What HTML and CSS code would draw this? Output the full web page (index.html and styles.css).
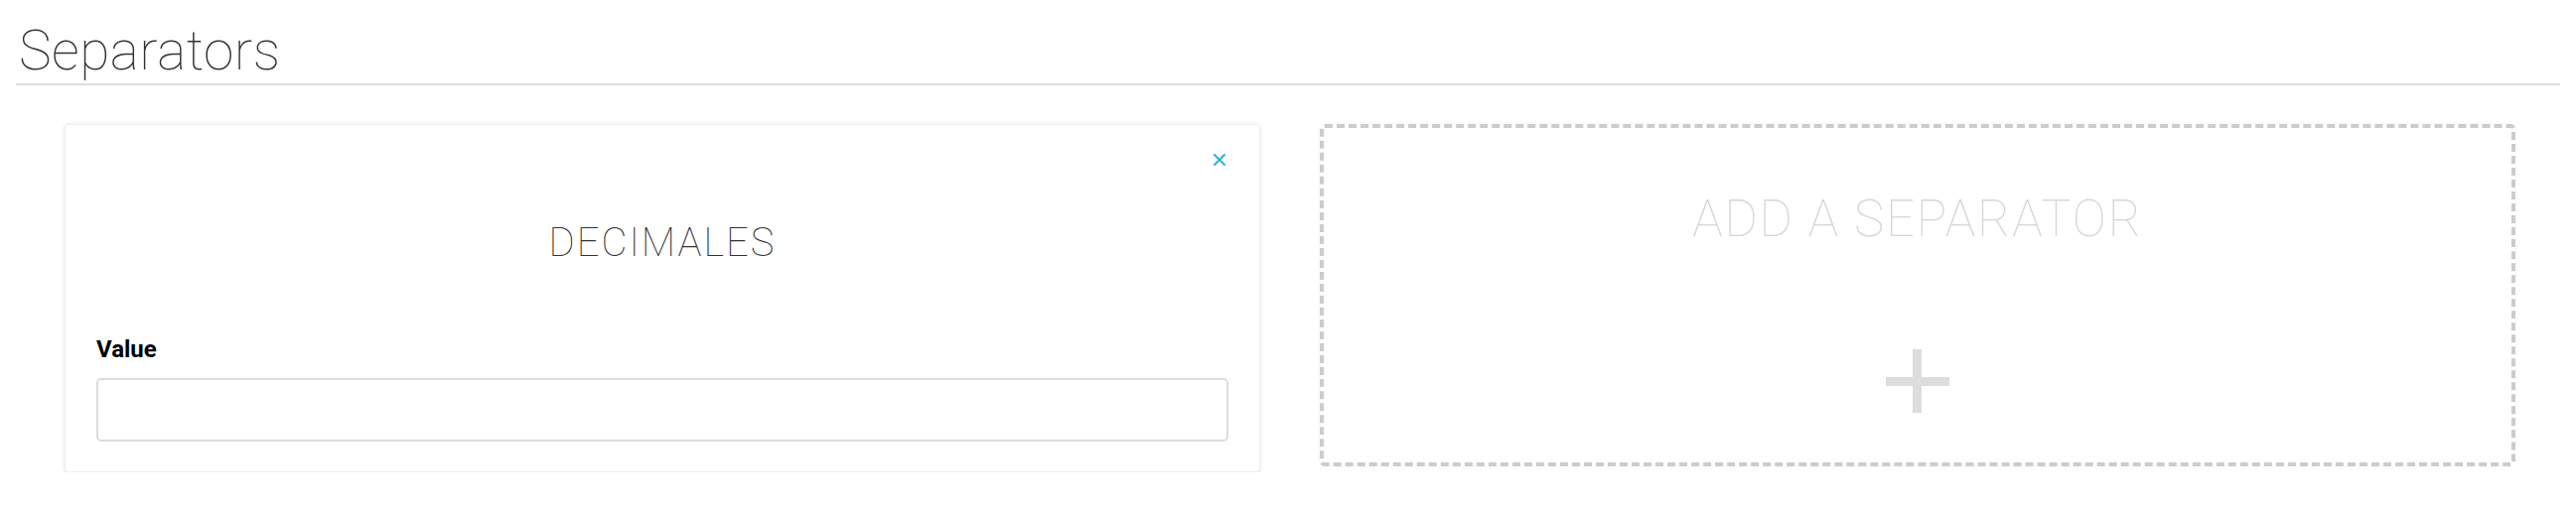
FILE: index.html
```html
<!DOCTYPE html>
<html lang="en">
<head>
<meta charset="utf-8">
<title>Separators</title>
<link rel="stylesheet" href="styles.css">
</head>
<body>
<div class="page">
  <header class="page-header">
    <h1 class="page-title">Separators</h1>
  </header>
  <section class="separator-grid">
    <div class="card">
      <button class="card-close" type="button" aria-label="Remove">
        <svg width="12" height="12" viewBox="0 0 12 12"><path d="M1 1L11 11M11 1L1 11" stroke="#2cb5e2" stroke-width="2.2" stroke-linecap="square"/></svg>
      </button>
      <h2 class="card-title">DECIMALES</h2>
      <label class="field-label" for="sep-value">Value</label>
      <input class="field-input" id="sep-value" type="text">
    </div>
    <div class="add-card">
      <h2 class="add-title">ADD A SEPARATOR</h2>
      <div class="add-plus" aria-hidden="true"></div>
    </div>
  </section>
</div>
</body>
</html>
```

FILE: styles.css
```css
* { box-sizing: border-box; }
html, body { margin: 0; padding: 0; background: #fff; }
body { font-family: "Roboto", "Liberation Sans", sans-serif; color: #000; }

.page { padding: 0 16px; }

.page-header {
  border-bottom: 2px solid #dddddd;
  height: 86px;
  display: flex;
  align-items: flex-end;
}
.page-title {
  margin: 0 0 1px 3px;
  font-family: "Roboto", sans-serif;
  font-weight: 100;
  font-size: 55px;
  line-height: 64px;
  color: #333;
  letter-spacing: 0.5px;
}

.separator-grid {
  display: grid;
  grid-template-columns: 1fr 1fr;
  gap: 60px;
  padding: 39px 45px 0 49px;
  align-items: start;
}

.card {
  position: relative;
  background: #fff;
  border: 1px solid #f0f0f0;
  border-radius: 4px;
  box-shadow: 0 0 5px rgba(0,0,0,0.08), 0 2px 3px rgba(0,0,0,0.06);
  padding: 95px 31px 30px;
  height: 351px;
}
.card-close {
  position: absolute;
  top: 29px;
  right: 34px;
  width: 12px;
  height: 12px;
  padding: 0;
  border: 0;
  background: none;
  display: flex;
}
.card-title {
  margin: 0;
  text-align: center;
  font-family: "Roboto", sans-serif;
  font-weight: 100;
  font-size: 40px;
  line-height: 48px;
  letter-spacing: 2px;
  color: #333;
}
.field-label {
  display: block;
  margin-top: 69px;
  font-weight: 700;
  font-size: 24px;
  line-height: 28px;
}
.field-input {
  display: block;
  width: 100%;
  height: 64px;
  margin-top: 15px;
  border: 2px solid #dcdcdc;
  border-radius: 5px;
  background: #fff;
  font-size: 20px;
}

.add-card {
  height: 345px;
  border: 4px dashed #cccccc;
  border-radius: 5px;
  box-shadow: 0 0 4px rgba(0,0,0,0.05);
  display: flex;
  flex-direction: column;
  align-items: center;
  padding-top: 64px;
}
.add-title {
  margin: 0;
  font-family: "Roboto", sans-serif;
  font-weight: 100;
  font-size: 51px;
  line-height: 56px;
  letter-spacing: 1.8px;
  color: #d6d6d6;
}
.add-plus {
  position: relative;
  width: 64px;
  height: 64px;
  margin-top: 103px;
}
.add-plus::before,
.add-plus::after {
  content: "";
  position: absolute;
  background: #dddddd;
}
.add-plus::before { left: 27px; top: 0; width: 9px; height: 64px; }
.add-plus::after { left: 0; top: 28px; width: 64px; height: 9px; }
```
